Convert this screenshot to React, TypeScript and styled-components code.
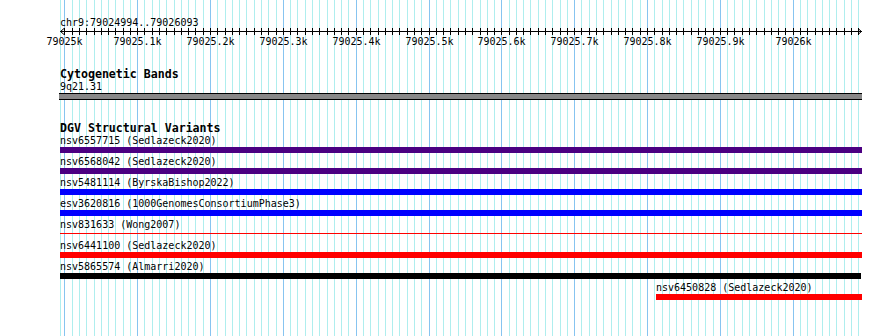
import React from 'react';
import styled, { createGlobalStyle } from 'styled-components';

const START = 79024994;
const END = 79026093;
const LEFT = 60;
const SCALE = 0.7283;
const PAGE_W = 890;
const PAGE_H = 336;

const bpToX = (bp: number) => LEFT + (bp - START) * SCALE;
const px = (bp: number) => Math.round(bpToX(bp));

type Variant = {
  name: string;
  color: string;
  start: number;
  end: number;
  thin?: boolean;
};

const variants: Variant[] = [
  { name: 'nsv6557715 (Sedlazeck2020)', color: '#4b0082', start: START, end: END },
  { name: 'nsv6568042 (Sedlazeck2020)', color: '#4b0082', start: START, end: END },
  { name: 'nsv5481114 (ByrskaBishop2022)', color: '#0000ff', start: START, end: END },
  { name: 'esv3620816 (1000GenomesConsortiumPhase3)', color: '#0000ff', start: START, end: END },
  { name: 'nsv831633 (Wong2007)', color: '#ff0000', start: START, end: END, thin: true },
  { name: 'nsv6441100 (Sedlazeck2020)', color: '#ff0000', start: START, end: END },
  { name: 'nsv5865574 (Almarri2020)', color: '#000000', start: START, end: END - 1 },
  { name: 'nsv6450828 (Sedlazeck2020)', color: '#ff0000', start: 79025812, end: END },
];

const gridBps: number[] = [];
for (let bp = 79025000; bp <= END; bp += 10) gridBps.push(bp);

const majorLabels = [
  '79025k', '79025.1k', '79025.2k', '79025.3k', '79025.4k', '79025.5k',
  '79025.6k', '79025.7k', '79025.8k', '79025.9k', '79026k',
];

const GlobalStyle = createGlobalStyle`
  html, body {
    margin: 0;
    padding: 0;
    background: #ffffff;
  }
  body {
    font-family: "DejaVu Sans Mono", "Liberation Mono", monospace;
    color: #000000;
  }
`;

const Page = styled.div`
  position: relative;
  width: ${PAGE_W}px;
  height: ${PAGE_H}px;
  overflow: hidden;
  background: #ffffff;
`;

const GridLayer = styled.svg`
  position: absolute;
  left: 0;
  top: 0;
  z-index: 0;
  display: block;
`;

const Content = styled.div`
  position: relative;
  z-index: 1;
  display: flex;
  flex-direction: column;
`;

const Ruler = styled.div`
  display: flex;
  flex-direction: column;
  padding-top: 16px;
`;

const Location = styled.div`
  padding-left: ${LEFT}px;
  font-size: 10px;
  line-height: 14px;
  height: 12px;
  white-space: nowrap;
`;

const AxisSvg = styled.svg`
  display: block;
  overflow: visible;
  font-family: "DejaVu Sans Mono", "Liberation Mono", monospace;
`;

const Track = styled.section<{ $gap: number }>`
  display: flex;
  flex-direction: column;
  padding-left: ${LEFT}px;
  margin-top: ${(p) => p.$gap}px;
`;

const TrackTitle = styled.div`
  font-size: 11.6px;
  font-weight: bold;
  line-height: 13px;
  height: 11px;
  white-space: nowrap;
`;

const FeatureLabel = styled.div`
  font-size: 10px;
  line-height: 16px;
  height: 14px;
  white-space: nowrap;
`;

const BandBar = styled.div`
  margin-left: -1px;
  width: 803px;
  height: 5px;
  background: #888888;
  border-top: 1px solid #000000;
  border-bottom: 1px solid #000000;
`;

const Rows = styled.div`
  display: flex;
  flex-direction: column;
  gap: 1px;
`;

const Row = styled.div`
  display: flex;
  flex-direction: column;
`;

const BarSlot = styled.div`
  height: 6px;
  display: flex;
  flex-direction: column;
`;

const Bar = styled.div<{ $color: string; $thin?: boolean }>`
  height: ${(p) => (p.$thin ? '1px' : '6px')};
  margin-top: ${(p) => (p.$thin ? '2px' : '0')};
  background: ${(p) => p.$color};
`;

const Grid: React.FC = () => (
  <GridLayer width={PAGE_W} height={PAGE_H} shapeRendering="crispEdges">
    <rect x={LEFT} y={0} width={1} height={PAGE_H} fill="#afeeee" />
    {gridBps.map((bp) => (
      <rect
        key={bp}
        x={px(bp)}
        y={0}
        width={1}
        height={PAGE_H}
        fill={bp % 100 === 0 ? '#87c4f0' : '#afeeee'}
      />
    ))}
  </GridLayer>
);

const Axis: React.FC = () => {
  const right = px(END + 1);
  return (
    <AxisSvg width={PAGE_W} height={20} shapeRendering="crispEdges">
      <rect x={LEFT} y={3} width={right - LEFT + 1} height={1} fill="#000" />
      <polyline points={`${LEFT + 4},0.5 ${LEFT + 0.5},3.5 ${LEFT + 4},6.5`} fill="none" stroke="#000" strokeWidth={1} shapeRendering="auto" />
      <polyline points={`${right - 3},0.5 ${right + 0.5},3.5 ${right - 3},6.5`} fill="none" stroke="#000" strokeWidth={1} shapeRendering="auto" />
      {gridBps.map((bp) => (
        <rect key={bp} x={px(bp)} y={0} width={1} height={7} fill="#000" />
      ))}
      {majorLabels.map((label, i) => (
        <text
          key={label}
          x={px(79025000 + i * 100) + 0.5}
          y={17}
          fontSize={10}
          textAnchor="middle"
          fill="#000"
          shapeRendering="auto"
        >
          {label}
        </text>
      ))}
    </AxisSvg>
  );
};

const VariantRow: React.FC<{ v: Variant }> = ({ v }) => {
  const x0 = px(v.start);
  const x1 = px(v.end + 1);
  const offset = x0 - LEFT;
  const width = x1 - x0 + 1;
  return (
    <Row style={{ marginLeft: offset }}>
      <FeatureLabel>{v.name}</FeatureLabel>
      <BarSlot>
        <Bar $color={v.color} $thin={v.thin} style={{ width }} />
      </BarSlot>
    </Row>
  );
};

export default function App() {
  return (
    <>
      <GlobalStyle />
      <Page>
        <Grid />
        <Content>
          <Ruler>
            <Location>chr9:79024994..79026093</Location>
            <Axis />
          </Ruler>
          <Track $gap={20}>
            <TrackTitle>Cytogenetic Bands</TrackTitle>
            <FeatureLabel>9q21.31</FeatureLabel>
            <BandBar />
          </Track>
          <Track $gap={22}>
            <TrackTitle>DGV Structural Variants</TrackTitle>
            <Rows>
              {variants.map((v) => (
                <VariantRow key={v.name} v={v} />
              ))}
            </Rows>
          </Track>
        </Content>
      </Page>
    </>
  );
}
